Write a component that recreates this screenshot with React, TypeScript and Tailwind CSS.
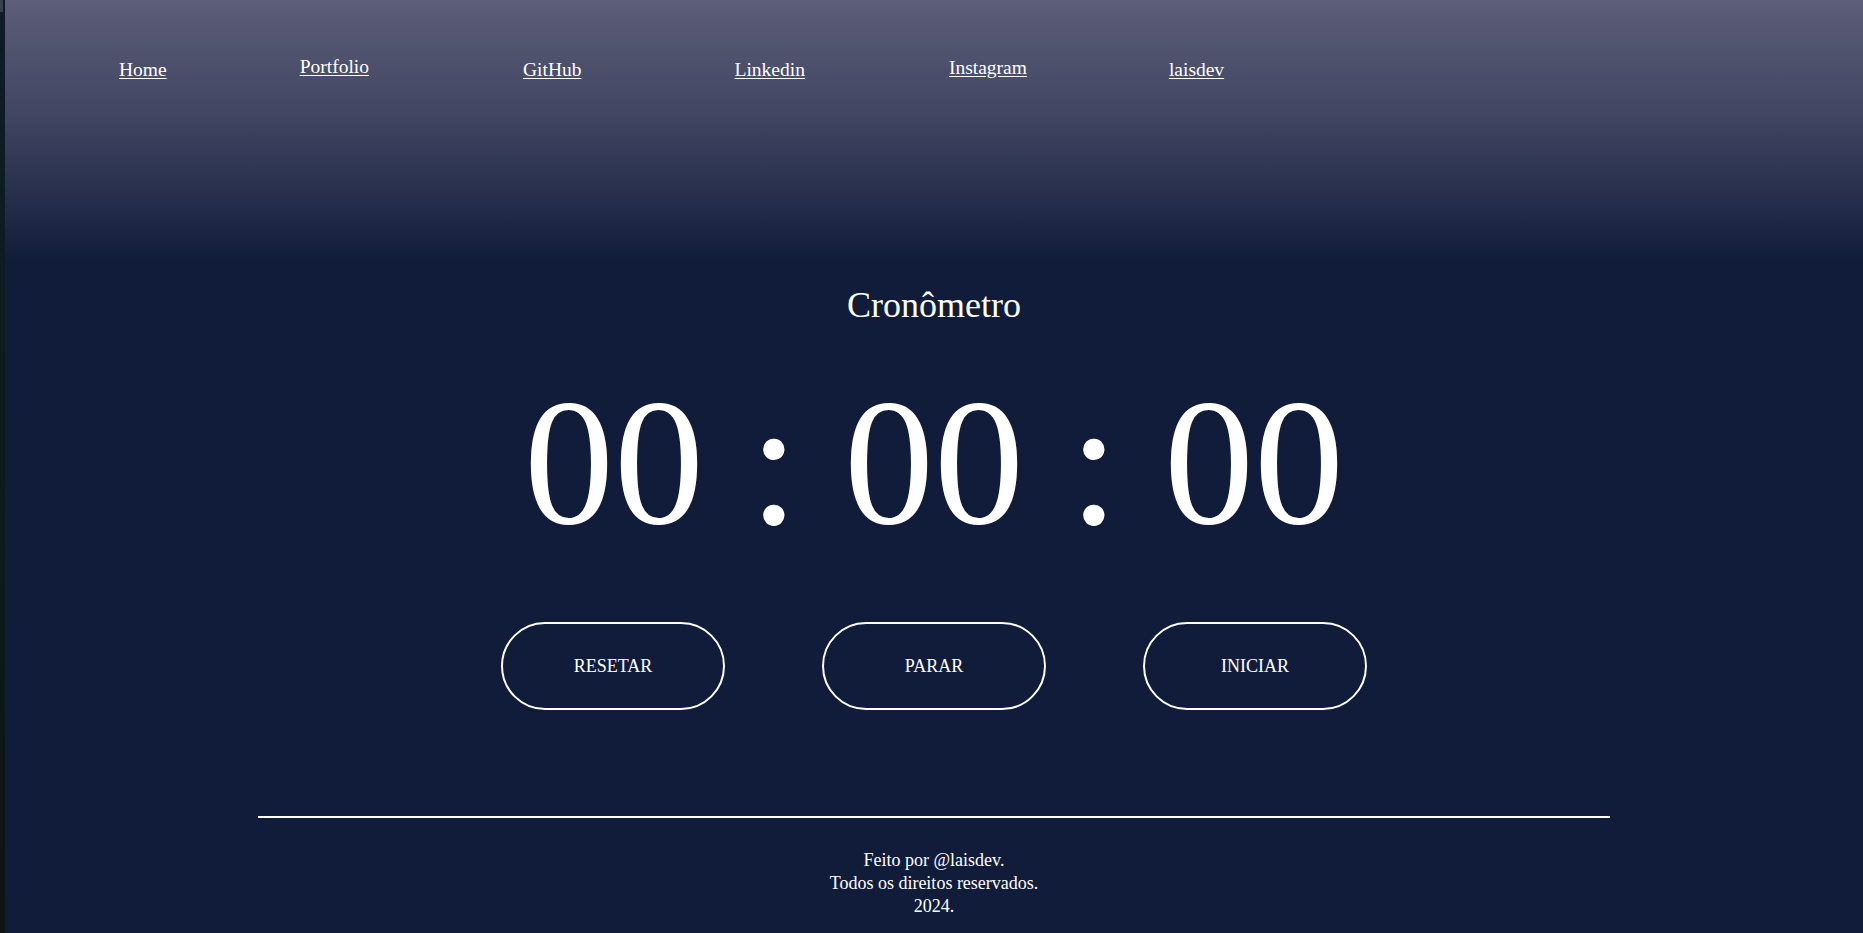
const links = [
  { label: "Home", className: "ml-[114px] mt-[3px]" },
  { label: "Portfolio", className: "ml-[133px] mt-0" },
  { label: "GitHub", className: "ml-[154px] mt-[3px]" },
  { label: "Linkedin", className: "ml-[153px] mt-[3px]" },
  { label: "Instagram", className: "ml-[144px] mt-[1px]" },
  { label: "laisdev", className: "ml-[142px] mt-[3px]" },
];

const buttons = ["RESETAR", "PARAR", "INICIAR"];

export default function App() {
  return (
    <div className="flex h-screen w-full overflow-hidden font-['Liberation_Serif',serif] text-white">
      {/* left window edge */}
      <div className="flex w-[5px] shrink-0 flex-col bg-[linear-gradient(#0f1c26,#0d1a1e_50%,#0c1416)]">
        <div className="h-[12px] w-[3px] bg-[#3a3f4a]" />
      </div>

      <div className="flex flex-1 flex-col bg-[#111c3b] bg-[linear-gradient(#5d5e79,#3f4460_120px,#111c3b_262px)]">
        <nav className="flex items-start pt-[52px] text-[19.5px]">
          {links.map((l) => (
            <a key={l.label} href="#" className={`${l.className} text-white underline underline-offset-2`}>
              {l.label}
            </a>
          ))}
        </nav>

        <main className="flex flex-col items-center">
          <h1 className="mt-[200px] text-[36px] leading-[42px] font-normal">Cronômetro</h1>

          <div className="mt-[47px] text-[180px] leading-none whitespace-pre">
            <span>00</span>
            <span> : </span>
            <span>00</span>
            <span> : </span>
            <span>00</span>
          </div>

          <div className="mt-[69px] flex gap-[97px]">
            {buttons.map((b) => (
              <button
                key={b}
                className="flex h-[88px] w-[224px] items-center justify-center rounded-full border-2 border-white bg-transparent text-[18px] text-white"
              >
                {b}
              </button>
            ))}
          </div>
        </main>

        <footer className="flex flex-col items-center">
          <hr className="mt-[106px] w-[1352px] border-t-2 border-white" />
          <div className="mt-[31px] text-center text-[18px] leading-[23px]">
            <p>Feito por @laisdev.</p>
            <p>Todos os direitos reservados.</p>
            <p>2024.</p>
          </div>
        </footer>
      </div>
    </div>
  );
}
